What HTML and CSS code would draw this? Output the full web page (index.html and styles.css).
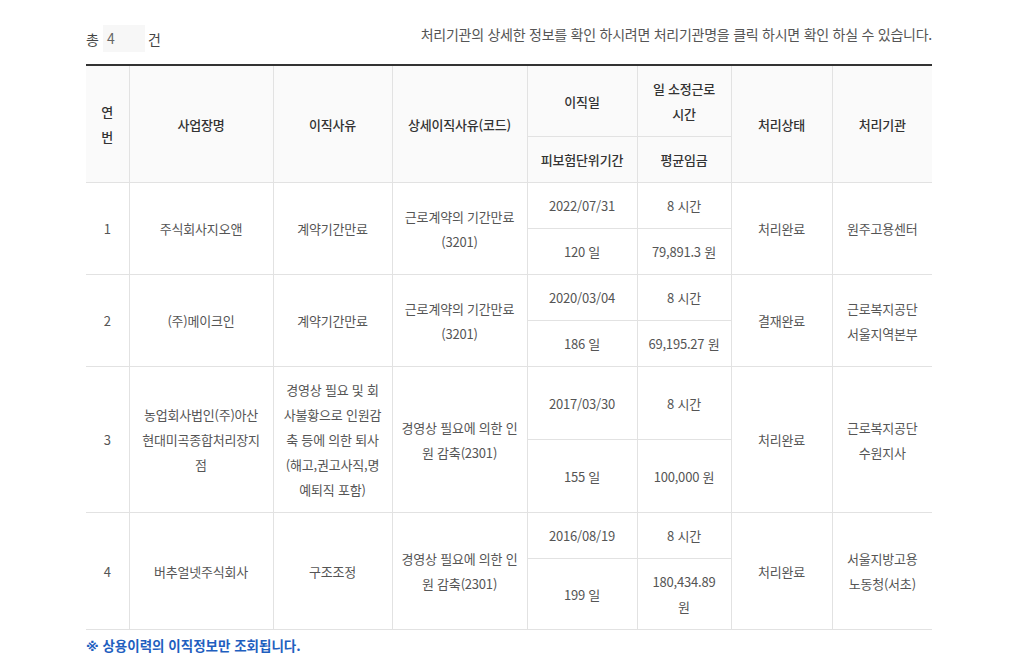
FILE: index.html
```html
<!DOCTYPE html>
<html lang="ko">
<head>
<meta charset="utf-8">
<link rel="stylesheet" href="styles.css">
</head>
<body>
<div class="wrap">
  <div class="topbar">
    <div class="count">총 <span class="count-box">4</span> 건</div>
    <div class="guide">처리기관의 상세한 정보를 확인 하시려면 처리기관명을 클릭 하시면 확인 하실 수 있습니다.</div>
  </div>
  <table class="list">
    <colgroup>
      <col class="c1">
      <col class="c2">
      <col class="c3">
      <col class="c4">
      <col class="c5">
      <col class="c6">
      <col class="c7">
      <col class="c8">
    </colgroup>
    <thead>
      <tr>
        <th rowspan="2" class="no">연번</th>
        <th rowspan="2">사업장명</th>
        <th rowspan="2">이직사유</th>
        <th rowspan="2">상세이직사유(코드)</th>
        <th>이직일</th>
        <th>일 소정근로<br>시간</th>
        <th rowspan="2">처리상태</th>
        <th rowspan="2">처리기관</th>
      </tr>
      <tr>
        <th class="first">피보험단위기간</th>
        <th class="last">평균임금</th>
      </tr>
    </thead>
    <tbody>
      <tr>
        <td rowspan="2">1</td>
        <td rowspan="2">주식회사지오앤</td>
        <td rowspan="2">계약기간만료</td>
        <td rowspan="2">근로계약의 기간만료<br>(3201)</td>
        <td>2022/07/31</td>
        <td>8 시간</td>
        <td rowspan="2">처리완료</td>
        <td rowspan="2">원주고용센터</td>
      </tr>
      <tr>
        <td class="first">120 일</td>
        <td class="last">79,891.3 원</td>
      </tr>
      <tr>
        <td rowspan="2">2</td>
        <td rowspan="2">(주)메이크인</td>
        <td rowspan="2">계약기간만료</td>
        <td rowspan="2">근로계약의 기간만료<br>(3201)</td>
        <td>2020/03/04</td>
        <td>8 시간</td>
        <td rowspan="2">결재완료</td>
        <td rowspan="2">근로복지공단<br>서울지역본부</td>
      </tr>
      <tr>
        <td class="first">186 일</td>
        <td class="last">69,195.27 원</td>
      </tr>
      <tr>
        <td rowspan="2">3</td>
        <td rowspan="2">농업회사법인(주)아산<br>현대미곡종합처리장지<br>점</td>
        <td rowspan="2">경영상 필요 및 회<br>사불황으로 인원감<br>축 등에 의한 퇴사<br>(해고,권고사직,명<br>예퇴직 포함)</td>
        <td rowspan="2">경영상 필요에 의한 인<br>원 감축(2301)</td>
        <td>2017/03/30</td>
        <td>8 시간</td>
        <td rowspan="2">처리완료</td>
        <td rowspan="2">근로복지공단<br>수원지사</td>
      </tr>
      <tr>
        <td class="first">155 일</td>
        <td class="last">100,000 원</td>
      </tr>
      <tr>
        <td rowspan="2">4</td>
        <td rowspan="2">버추얼넷주식회사</td>
        <td rowspan="2">구조조정</td>
        <td rowspan="2">경영상 필요에 의한 인<br>원 감축(2301)</td>
        <td>2016/08/19</td>
        <td>8 시간</td>
        <td rowspan="2">처리완료</td>
        <td rowspan="2">서울지방고용<br>노동청(서초)</td>
      </tr>
      <tr>
        <td class="first">199 일</td>
        <td class="last">180,434.89<br>원</td>
      </tr>
    </tbody>
  </table>
  <p class="note"><span class="mark">※</span> 상용이력의 이직정보만 조회됩니다.</p>
</div>
</body>
</html>
```
FILE: styles.css
```css
html, body {
  margin: 0;
  padding: 0;
  background: #fff;
}
body {
  font-family: "Noto Sans CJK KR", "Noto Sans", sans-serif;
  font-size: 13px;
  color: #555;
}
.wrap {
  width: 846px;
  margin-left: 86px;
  padding-top: 24px;
}
.topbar {
  display: flex;
  justify-content: space-between;
  align-items: center;
  height: 29px;
  margin-bottom: 11px;
}
.count {
  display: flex;
  align-items: center;
  color: #444;
  font-size: 14px;
}
.count-box {
  display: inline-block;
  width: 38px;
  height: 27px;
  line-height: 27px;
  margin: 0 3px 0 4px;
  padding-left: 4px;
  background: #f7f7f7;
  color: #666;
}
.guide {
  align-self: flex-start;
  margin-top: 0;
  line-height: 20px;
  color: #555;
  font-size: 14px;
  letter-spacing: -0.25px;
}
.list {
  width: 846px;
  table-layout: fixed;
  border-collapse: collapse;
  border-top: 2px solid #333;
  letter-spacing: -0.2px;
}
.c1 { width: 43px; }
.c2 { width: 144px; }
.c3 { width: 119px; }
.c4 { width: 135px; }
.c5 { width: 110px; }
.c6 { width: 94px; }
.c7 { width: 101px; }
.c8 { width: 100px; }
.list th,
.list td {
  border: 1px solid #e2e2e2;
  padding: 10px 2px;
  line-height: 25px;
  text-align: center;
  vertical-align: middle;
  white-space: nowrap;
}
.list th.no {
  white-space: normal;
  padding: 10px 12px;
}
.list th {
  background: #fafafa;
  color: #333;
  font-weight: 500;
}
.list tr > :first-child {
  border-left: 0;
}
.list tr > :last-child {
  border-right: 0;
}
.list tr > .first {
  border-left: 1px solid #e2e2e2;
}
.list tr > .last {
  border-right: 1px solid #e2e2e2;
}
.note {
  margin: 5px 0 0;
  line-height: 20px;
  color: #1f5fbf;
  font-weight: bold;
  font-size: 13.5px;
}
.mark {
  font-family: "DejaVu Sans", sans-serif;
  font-size: 13px;
}
```
